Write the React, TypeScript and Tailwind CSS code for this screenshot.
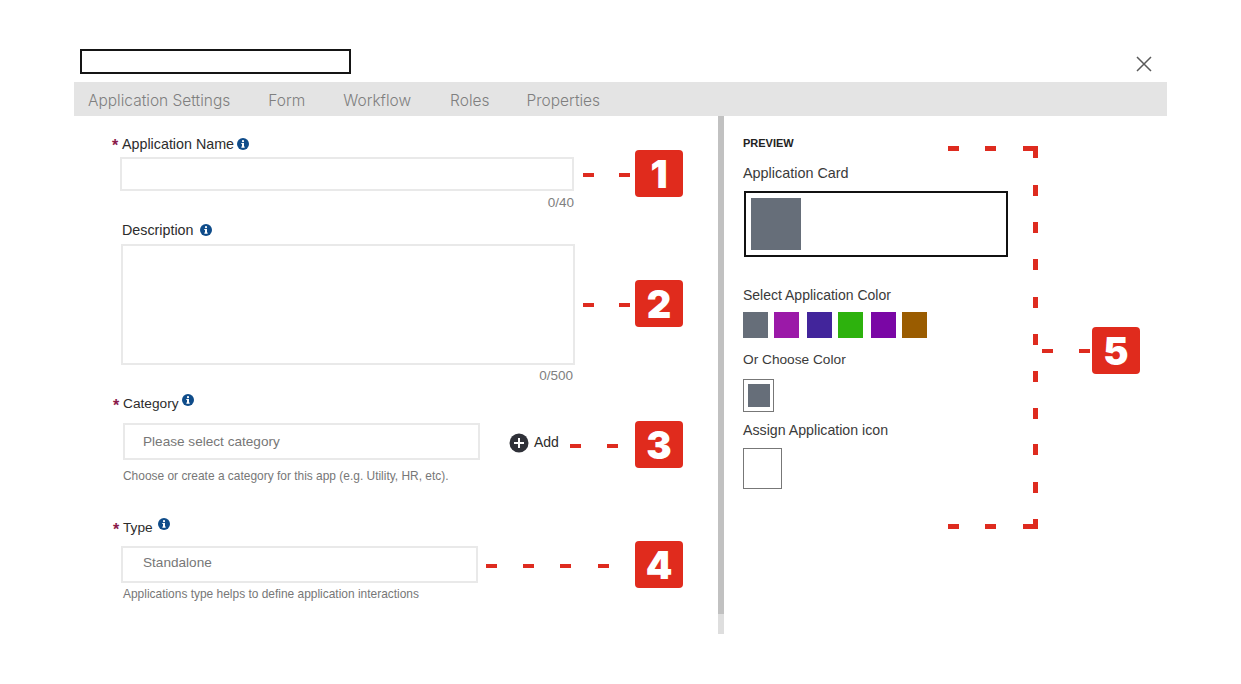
import { ReactNode } from 'react';

const tabs = [
  { label: 'Application Settings', cls: '' },
  { label: 'Form', cls: 'ml-[38px]' },
  { label: 'Workflow', cls: 'ml-[38px]' },
  { label: 'Roles', cls: 'ml-[39px]' },
  { label: 'Properties', cls: 'ml-[37px]' },
];

const swatches = [
  { color: 'bg-[#666e79]', cls: '' },
  { color: 'bg-[#9b19a8]', cls: 'ml-[6px]' },
  { color: 'bg-[#42259b]', cls: 'ml-[8px]' },
  { color: 'bg-[#2db20d]', cls: 'ml-[6px]' },
  { color: 'bg-[#7a06a5]', cls: 'ml-[8px]' },
  { color: 'bg-[#9a5c00]', cls: 'ml-[6px]' },
];

// annotation dashes: left, top, width, height
const dashes = [
  [583, 173, 11, 4], [619, 173, 11, 4],
  [583, 303, 11, 4], [619, 303, 11, 4],
  [570, 444, 11, 4], [607, 444, 11, 4],
  [486, 564, 11, 4], [523, 564, 11, 4], [560, 564, 11, 4], [598, 564, 11, 4],
  [1042, 349, 11, 4], [1079, 349, 11, 4],
  [948, 146, 11, 5], [985, 146, 11, 5], [1023, 146, 15, 5], [1033, 148, 5, 10],
  [1033, 185, 5, 11], [1033, 222, 5, 11], [1033, 259, 5, 11], [1033, 297, 5, 11], [1033, 334, 5, 11],
  [1033, 371, 5, 11], [1033, 408, 5, 11], [1033, 444, 5, 11], [1033, 482, 5, 11], [1033, 519, 5, 10],
  [1023, 524, 15, 5], [948, 524, 11, 5], [985, 524, 11, 5],
];

const badges = [
  { n: '1', x: 635, y: 150 },
  { n: '2', x: 635, y: 280 },
  { n: '3', x: 635, y: 421 },
  { n: '4', x: 635, y: 541 },
  { n: '5', x: 1092, y: 327 },
];

function InfoIcon() {
  return (
    <svg width="12" height="12" viewBox="0 0 12 12" className="shrink-0">
      <circle cx="6" cy="6" r="6" fill="#0f4c8a" />
      <rect x="5" y="5" width="2" height="4.4" fill="#fff" />
      <rect x="4.2" y="8.6" width="3.6" height="1" fill="#fff" />
      <rect x="4.2" y="5" width="1.6" height="0.9" fill="#fff" />
      <circle cx="6" cy="3.2" r="1.1" fill="#fff" />
    </svg>
  );
}

function Star() {
  return <span className="absolute left-[-10px] top-[3px] text-[16px] font-bold leading-[15px] text-[#8a1a4a]">*</span>;
}

function Box({ className, children }: { className: string; children?: ReactNode }) {
  return <div className={`border-2 border-[#e9e9e9] ${className}`}>{children}</div>;
}

export default function App() {
  return (
    <div className="relative h-[684px] w-[1241px] overflow-hidden bg-white font-['Liberation_Sans',Arial,sans-serif] text-[14px] text-[#2c2c2c]">
      <div className="px-[74px] pt-[49px]">
        <div className="flex items-start justify-between">
          <div className="ml-[6px] h-[25px] w-[271px] border-2 border-[#151515]" />
          <svg width="16" height="16" viewBox="0 0 16 16" className="mr-[15px] mt-[7px]">
            <path d="M1 1 15 15M15 1 1 15" stroke="#5a5a5a" strokeWidth="1.5" fill="none" />
          </svg>
        </div>

        <div className="mt-[8px] flex h-[34px] items-center bg-[#e4e4e4] pl-[14px] pt-[3px] font-['Inter',sans-serif] text-[15.5px] font-light text-[#7f7f7f]">
          {tabs.map((t) => (
            <span key={t.label} className={t.cls}>{t.label}</span>
          ))}
        </div>

        <div className="flex">
          <div className="h-[518px] w-[644px] shrink-0 pl-[46px]">
            <div className="relative ml-[2px] mt-[19px] flex h-[18px] items-center gap-[3px] text-[14.3px] leading-[18px]">
              <Star />
              <span>Application Name</span>
              <InfoIcon />
            </div>
            <Box className="mt-[4px] h-[34px] w-[454px]" />
            <div className="mt-[5px] w-[454px] text-right text-[13.5px] leading-[14px] text-[#808080]">0/40</div>

            <div className="ml-[2px] mt-[11px] flex h-[18px] items-center gap-[6px] text-[14.3px] leading-[18px]">
              <span>Description</span>
              <InfoIcon />
            </div>
            <Box className="ml-[1px] mt-[5px] h-[121px] w-[454px]" />
            <div className="mt-[4px] w-[453px] text-right text-[13.5px] leading-[14px] text-[#808080]">0/500</div>

            <div className="relative ml-[3px] mt-[12px] flex h-[18px] items-center gap-[3px] text-[13.7px] leading-[18px]">
              <Star />
              <span>Category</span>
              <span className="mb-[9px]"><InfoIcon /></span>
            </div>
            <div className="ml-[3px] mt-[10px] flex items-center">
              <Box className="flex h-[37px] w-[357px] items-center pl-[18px] pt-[1px] text-[13.6px] text-[#777]">Please select category</Box>
              <svg width="20" height="20" viewBox="0 0 20 20" className="ml-[29px] mt-[2px]">
                <circle cx="10" cy="10" r="9.5" fill="#2f3138" />
                <path d="M10 5v10M5 10h10" stroke="#fff" strokeWidth="2" />
              </svg>
              <span className="ml-[5px] mt-[2px]">Add</span>
            </div>
            <div className="ml-[3px] mt-[9px] text-[11.95px] leading-[14px] text-[#777]">
              Choose or create a category for this app (e.g. Utility, HR, etc).
            </div>

            <div className="relative ml-[3px] mt-[36px] flex h-[18px] items-center gap-[5px] text-[13.7px] leading-[18px]">
              <Star />
              <span>Type</span>
              <span className="mb-[9px]"><InfoIcon /></span>
            </div>
            <Box className="ml-[1px] mt-[9px] flex h-[37px] w-[357px] items-center pb-[3px] pl-[20px] text-[13.6px] text-[#777]">Standalone</Box>
            <div className="ml-[3px] mt-[4px] text-[11.95px] leading-[14px] text-[#777]">
              Applications type helps to define application interactions
            </div>
          </div>

          <div className="flex h-[518px] w-[6px] shrink-0 flex-col bg-[#dedede]">
            <div className="h-[498px] bg-[#c1c1c1]" />
          </div>

          <div className="pl-[19px]">
            <div className="mt-[21px] text-[11px] font-bold leading-[13px] text-[#222]">PREVIEW</div>
            <div className="mt-[14px] text-[14.4px] leading-[18px] text-[#3a3a3a]">Application Card</div>
            <div className="ml-[1px] mt-[9px] h-[66px] w-[264px] border-2 border-[#111] pl-[5px] pt-[5px]">
              <div className="h-[52px] w-[50px] bg-[#666e79]" />
            </div>
            <div className="mt-[29px] leading-[18px] text-[#3a3a3a]">Select Application Color</div>
            <div className="mt-[8px] flex">
              {swatches.map((s, i) => (
                <div key={i} className={`h-[26px] w-[25px] ${s.color} ${s.cls}`} />
              ))}
            </div>
            <div className="mt-[13px] text-[13.7px] leading-[18px] text-[#3a3a3a]">Or Choose Color</div>
            <div className="mt-[10px] flex h-[33px] w-[31px] items-center justify-center border border-[#777]">
              <div className="h-[23px] w-[22px] bg-[#666e79]" />
            </div>
            <div className="mt-[9px] text-[14.2px] leading-[18px] text-[#3a3a3a]">Assign Application icon</div>
            <div className="mt-[9px] h-[41px] w-[39px] border border-[#777]" />
          </div>
        </div>
      </div>

      {dashes.map(([x, y, w, h], i) => (
        <span
          key={i}
          className="absolute bg-[#de2b1f]"
          style={{ left: x, top: y, width: w, height: h }}
        />
      ))}
      {badges.map((b) => (
        <div
          key={b.n}
          className="absolute flex h-[47px] w-[48px] items-center justify-center rounded-[4px] bg-[#e02b1d] font-['Inter',sans-serif] text-[38px] font-black leading-none text-white"
          style={{ left: b.x, top: b.y }}
        >
          {b.n}
        </div>
      ))}
    </div>
  );
}
